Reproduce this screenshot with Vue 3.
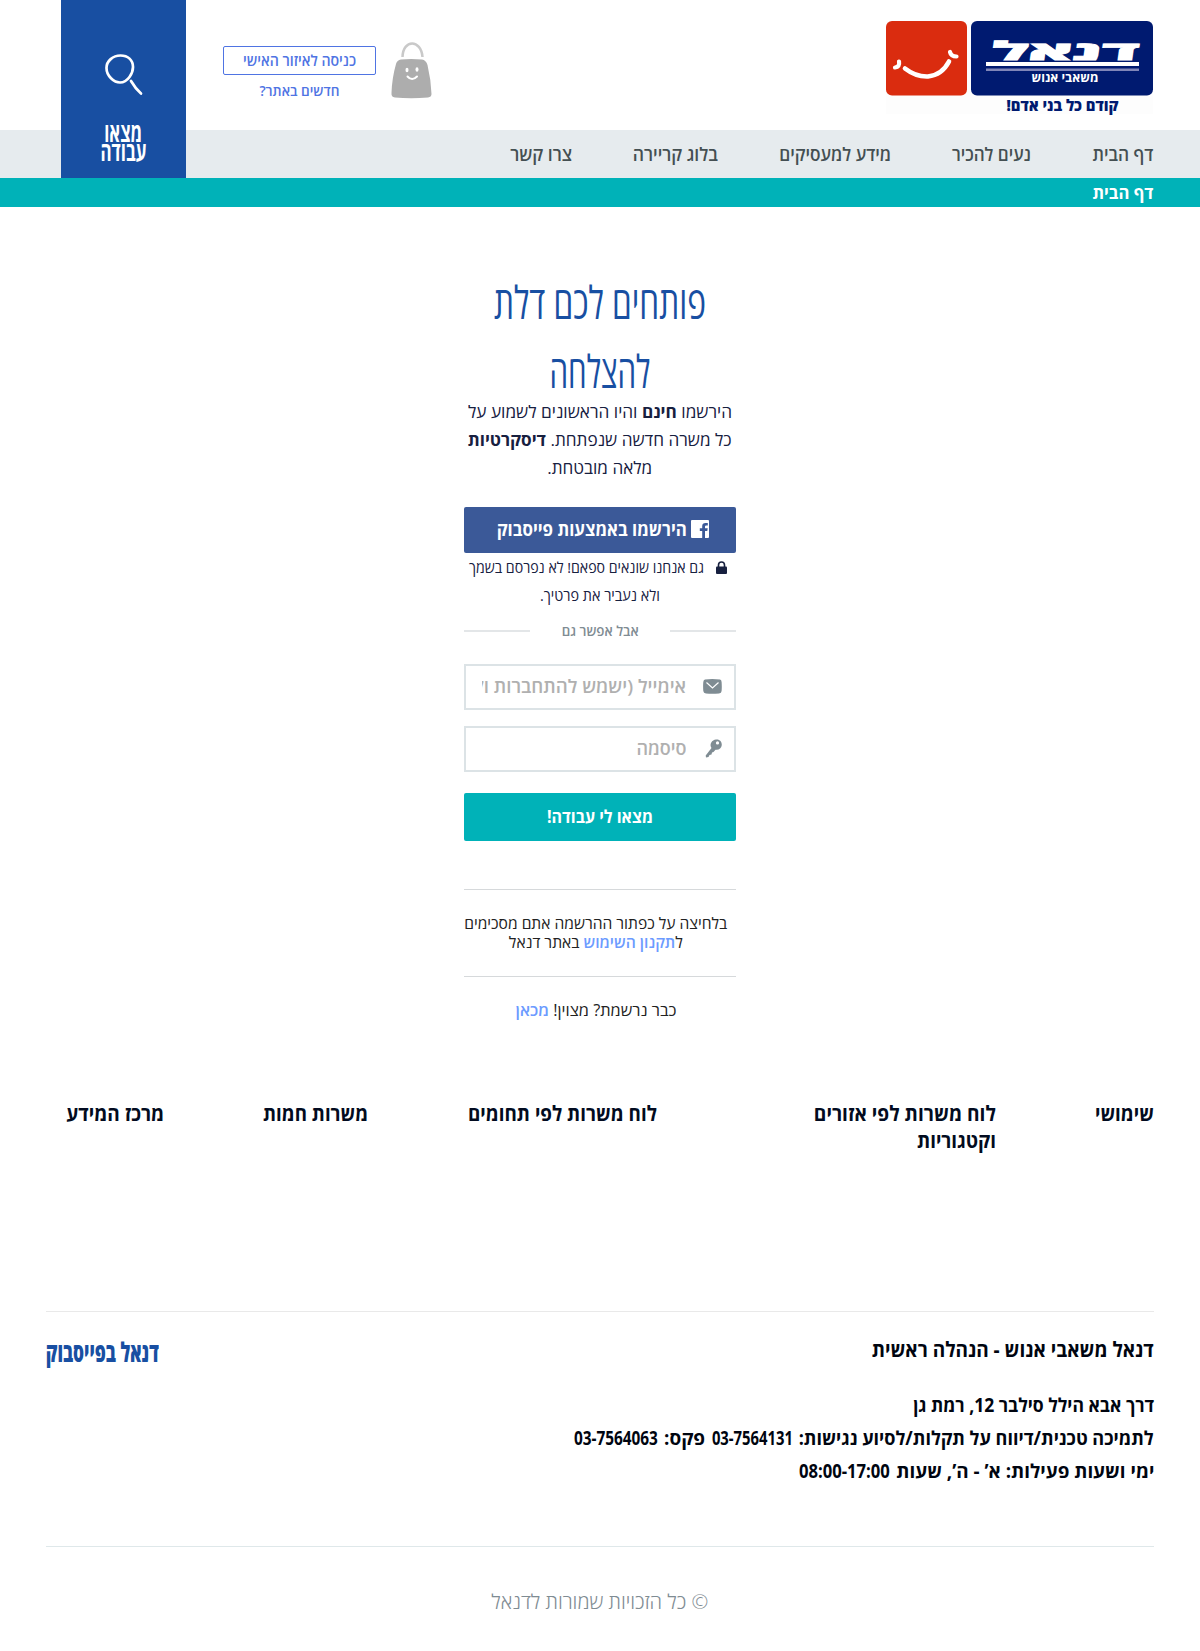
<script setup>
// Condenses or widens a line of text so that it takes exactly the given width.
const vFit = {
  mounted(el, { value }) {
    const natural = el.getBoundingClientRect().width
    el.style.transform = `scaleX(${value / natural})`
    el.style.marginLeft = `${value - natural}px`
  }
}

const nav = [
  { label: 'דף הבית', width: 61 },
  { label: 'נעים להכיר', width: 79 },
  { label: 'מידע למעסיקים', width: 112 },
  { label: 'בלוג קריירה', width: 85 },
  { label: 'צרו קשר', width: 62 }
]

const columns = [
  { lines: [{ text: 'שימושי', width: 59 }], box: 59 },
  { lines: [{ text: 'לוח משרות לפי אזורים', width: 182 }, { text: 'וקטגוריות', width: 79 }], box: 240 },
  { lines: [{ text: 'לוח משרות לפי תחומים', width: 189 }], box: 190 },
  { lines: [{ text: 'משרות חמות', width: 105 }], box: 105 },
  { lines: [{ text: 'מרכז המידע', width: 98 }], box: 98 }
]

const address = [
  [{ text: 'דרך אבא הילל סילבר 12, רמת גן', width: 241 }],
  [
    { text: 'לתמיכה טכנית/דיווח על תקלות/לסיוע נגישות:', width: 355 },
    { text: '03-7564131', width: 81 },
    { text: 'פקס:', width: 41 },
    { text: '03-7564063', width: 84 }
  ],
  [
    { text: 'ימי ושעות פעילות: א’ - ה’, שעות', width: 258 },
    { text: '08:00-17:00', width: 91 }
  ]
]
</script>

<template>
  <div class="page" dir="rtl">
    <header class="header">
      <div class="top">
        <a class="logo">
          <svg width="268" height="94" viewBox="0 0 268 94" direction="ltr">
            <rect width="267" height="93" fill="#fdfdfd" />
            <rect width="81" height="74.5" rx="6" fill="#da2c0f" />
            <rect x="85" width="182" height="74.5" rx="6" fill="#001a70" />
            <g fill="none" stroke="#fff" stroke-linecap="round">
              <path d="M19 47.500Q30 56 42 55.500Q56 54 63 40.500" stroke-width="4.600" />
              <path d="M9 46.500Q14 46 13 40.500" stroke-width="4.200" />
              <path d="M64 31Q65 35.500 70.500 35.500" stroke-width="4.200" />
            </g>
            <text class="logo-name" transform="translate(251.500 38.500) skewX(-8) scale(1 .8)" x="0" y="0" textLength="147" lengthAdjust="spacingAndGlyphs">דנאל</text>
            <rect x="100" y="41" width="153" height="4" fill="#fff" />
            <rect x="100" y="47.500" width="153" height="2.500" fill="#8086b8" />
            <text class="logo-sub" x="212.500" y="61" textLength="67" lengthAdjust="spacingAndGlyphs">משאבי אנוש</text>
            <text class="logo-tag" x="232.500" y="89.500" textLength="112" lengthAdjust="spacingAndGlyphs">קודם כל בני אדם!</text>
          </svg>
        </a>
        <div class="account">
          <svg class="bag" width="41" height="57" viewBox="0 0 41 57">
            <path d="M11.500 15C12 -3 30 -3 31.500 15" fill="none" stroke="#c9c9c9" stroke-width="2.500" />
            <path d="M10 17.500Q20 16.500 31 17.500Q35 18 36.500 23Q40 38 40.500 52Q40.500 55 37 55.500Q20 57 4 55.500Q0 55 .5 51Q1 36 5 22Q6 18 10 17.500Z" fill="#adadad" />
            <ellipse cx="16" cy="28" rx="1.500" ry="2.200" fill="#fff" />
            <ellipse cx="26" cy="27.500" rx="1.500" ry="2.200" fill="#fff" />
            <path d="M16.500 34.500Q21 39.500 26 34.500" fill="none" stroke="#fff" stroke-width="2" stroke-linecap="round" />
          </svg>
          <div class="account-links">
            <a class="login"><span v-fit="113" class="fit">כניסה לאיזור האישי</span></a>
            <a class="join"><span v-fit="80" class="fit">חדשים באתר?</span></a>
          </div>
        </div>
      </div>
      <nav class="nav">
        <a v-for="item in nav" :key="item.label"><span v-fit="item.width" class="fit">{{ item.label }}</span></a>
      </nav>
      <div class="crumbs"><span v-fit="61" class="fit">דף הבית</span></div>
      <a class="search">
        <svg width="38" height="42" viewBox="0 0 38 42" fill="none" stroke="#fff" stroke-width="2.700" stroke-linecap="round">
          <path d="M15.500 1.500C8 1.500 1.500 7 1.500 14C1.500 22 9 28.500 15 28.500C23 28.500 28 19 28 13C28 6 23 1.500 15.500 1.500Z" />
          <path d="M26 27Q30 34 36 39.500" />
        </svg>
        <span class="search-label">
          <span v-fit="38" class="fit">מצאו</span>
          <span v-fit="46" class="fit">עבודה</span>
        </span>
      </a>
    </header>

    <main class="signup">
      <h1 class="title">
        <span v-fit="212" class="fit">פותחים לכם דלת</span>
        <span v-fit="101" class="fit">להצלחה</span>
      </h1>
      <p class="lead">
        <span v-fit="264" class="fit">הירשמו <b>חינם</b> והיו הראשונים לשמוע על</span>
        <span v-fit="264" class="fit">כל משרה חדשה שנפתחת. <b>דיסקרטיות</b></span>
        <span v-fit="105" class="fit">מלאה מובטחת.</span>
      </p>
      <button class="facebook" type="button">
        <svg width="18" height="18" viewBox="0 0 18 18">
          <path d="M1 0H17Q18 0 18 1V17Q18 18 17 18H14V11H16.300L16.700 8.200H14V6.600Q14 5.500 15.200 5.500H16.800V3H14.500Q11.200 3 11.200 6.200V8.200H8.800V11H11.200V18H1Q0 18 0 17V1Q0 0 1 0Z" fill="#fff" />
        </svg>
        <span v-fit="190" class="fit">הירשמו באמצעות פייסבוק</span>
      </button>
      <p class="privacy">
        <span class="privacy-row">
          <svg width="11" height="13" viewBox="0 0 11 13">
            <path d="M2.500 6V4Q2.500 1 5.500 1Q8.500 1 8.500 4V6" fill="none" stroke="#17203f" stroke-width="1.600" />
            <rect y="5.500" width="11" height="7.500" rx="1" fill="#17203f" />
          </svg>
          <span v-fit="235" class="fit">גם אנחנו שונאים ספאם! לא נפרסם בשמך</span>
        </span>
        <span v-fit="120" class="fit">ולא נעביר את פרטיך.</span>
      </p>
      <div class="or"><i></i><span v-fit="77" class="fit">אבל אפשר גם</span><i></i></div>
      <label class="field">
        <svg width="19" height="15" viewBox="0 0 19 15">
          <path d="M2 .5Q9 -.3 17 .5Q18.500 .5 18.600 3Q19 8 18.600 12Q18.500 14.300 16 14.500Q9 15 3 14.500Q.5 14.300 .3 12Q-.1 7 .3 3Q.5 .6 2 .5Z" fill="#7f8c93" />
          <path d="M3.500 3.500L9.500 9L15.500 3.500" fill="none" stroke="#fff" stroke-width="1.200" />
        </svg>
        <span class="placeholder"><span v-fit="214" class="fit">אימייל (ישמש להתחברות וק</span></span>
      </label>
      <label class="field">
        <svg width="19" height="19" viewBox="-2.500 0 19 19">
          <path fill-rule="evenodd" d="M10.500 .5C14 0 16.500 2.500 16.300 6C16 9.500 13 11.300 10 10.700L8 13L6.500 13.500L6 15.500L4 16L3 18L.5 18.500L.2 16.500L6 9C3.500 5 6.500 1 10.500 .5ZM12 2.300A1.600 1.600 0 1 0 12 5.500A1.600 1.600 0 1 0 12 2.300Z" fill="#7f8c93" />
        </svg>
        <span class="placeholder"><span v-fit="50" class="fit">סיסמה</span></span>
      </label>
      <button class="submit" type="button"><span v-fit="106" class="fit">מצאו לי עבודה!</span></button>
      <p class="terms">
        <span v-fit="263" class="fit">בלחיצה על כפתור ההרשמה אתם מסכימים</span>
        <span v-fit="174" class="fit">ל<a>תקנון השימוש</a> באתר דנאל</span>
      </p>
      <p class="already"><span v-fit="161" class="fit">כבר נרשמת? מצוין! <a>מכאן</a></span></p>
    </main>

    <footer class="footer">
      <div class="columns">
        <h3 v-for="(col, i) in columns" :key="i" :style="{ width: col.box + 'px' }">
          <span v-for="line in col.lines" :key="line.text" v-fit="line.width" class="fit">{{ line.text }}</span>
        </h3>
      </div>
      <div class="contact">
        <div>
          <h4 class="company"><span v-fit="282" class="fit">דנאל משאבי אנוש - הנהלה ראשית</span></h4>
          <p class="address">
            <span v-for="(line, i) in address" :key="i" class="address-line">
              <span v-for="part in line" :key="part.text" v-fit="part.width" class="fit">{{ part.text }}</span>
            </span>
          </p>
        </div>
        <h4 class="social"><span v-fit="113" class="fit">דנאל בפייסבוק</span></h4>
      </div>
      <p class="copyright"><span v-fit="217" class="fit">© כל הזכויות שמורות לדנאל</span></p>
    </footer>
  </div>
</template>

<style>
body { margin: 0; background: #fff; }
</style>

<style scoped>
.page { width: 1200px; height: 1651px; font-family: "Open Sans", "DejaVu Sans", sans-serif; color: #17203f; overflow: hidden; }
.page * { box-sizing: border-box; }
h1, h3, h4, p { margin: 0; }
svg { flex: none; display: block; }
button { border: 0; padding: 0; font-family: inherit; }
.fit { display: inline-block; flex: none; white-space: nowrap; transform-origin: right center; }

.header { position: relative; }
.top { height: 130px; padding: 21px 46px 0 0; display: flex; justify-content: space-between; }
.logo-name { font-size: 32px; font-weight: 800; fill: #fff; direction: rtl; stroke: #fff; stroke-width: 1; }
.logo-sub { font-size: 13px; font-weight: 700; fill: #fff; direction: rtl; }
.logo-tag { font-size: 16px; font-weight: 800; fill: #001a70; direction: rtl; }
.account { display: flex; gap: 15px; padding-top: 21px; margin-left: 223px; }
.account-links { width: 153px; padding-top: 4px; display: flex; flex-direction: column; }
.login, .join { display: flex; justify-content: center; color: #4f74e3; font-weight: 600; font-size: 15px; }
.login { height: 29px; line-height: 26px; border: 1px solid #4f74e3; border-radius: 2px; }
.join { line-height: 20px; margin-top: 6px; font-size: 14px; }
.nav { height: 48px; background: #e6ebee; padding-right: 47px; display: flex; gap: 61px; font-size: 18.500px; line-height: 48px; color: #444f52; font-weight: 550; }
.crumbs { height: 29px; background: #00b2b8; padding-right: 47px; color: #fff; font-size: 17px; font-weight: 700; line-height: 29px; }
.search { position: absolute; top: 0; left: 61px; width: 125px; height: 178px; background: #184fa2; display: flex; flex-direction: column; align-items: center; padding-top: 54px; color: #fff; }
.search-label { display: flex; flex-direction: column; align-items: center; margin-top: 26px; font-size: 27px; line-height: 19px; font-weight: 700; }

.signup { width: 272px; margin: 0 auto; height: 850px; padding-top: 60px; text-align: center; }
.signup .fit { vertical-align: top; }
.title { display: flex; flex-direction: column; align-items: center; font-size: 45px; line-height: 69px; font-weight: 500; color: #184fa2; }
.lead { display: flex; flex-direction: column; align-items: center; font-size: 17px; line-height: 28px; margin-top: -7px; font-weight: 450; }
.facebook { width: 272px; height: 46px; margin-top: 25px; border-radius: 2px; background: #3b5998; color: #fff; display: flex; align-items: center; justify-content: center; gap: 4px; font-size: 18.500px; font-weight: 700; line-height: 26px; padding: 0 0 3px 6px; }
.privacy { display: flex; flex-direction: column; align-items: center; font-size: 15px; line-height: 28px; font-weight: 450; }
.privacy-row { display: flex; align-items: center; gap: 12px; padding-right: 4px; }
.or { display: flex; align-items: center; justify-content: space-between; height: 20px; margin-top: 12px; color: #7f8c93; font-size: 14px; font-weight: 600; line-height: 20px; }
.or i { width: 66px; height: 2px; background: #e3e6e8; }
.field { display: flex; align-items: center; height: 46px; border: 2px solid #dce3e6; padding: 0 12px 2px 16px; margin-top: 16px; color: #b0b0b0; font-size: 18.500px; font-weight: 650; line-height: 26px; }
.or + .field { margin-top: 23px; }
.field svg { margin-left: 17px; width: 19px; }
.placeholder { flex: 1; min-width: 0; overflow: hidden; text-align: right; height: 30px; line-height: 30px; }
.submit { width: 272px; height: 48px; margin-top: 21px; border-radius: 2px; background: #00b2b8; color: #fff; font-size: 17.500px; font-weight: 700; line-height: 26px; display: flex; justify-content: center; align-items: center; padding-bottom: 3px; }
.terms { margin-top: 48px; border-top: 1px solid #d6d9db; border-bottom: 1px solid #d6d9db; height: 88px; padding: 24px 8px 0 0; display: flex; flex-direction: column; align-items: center; font-size: 16px; line-height: 19px; color: #222; }
.already { margin-top: 22px; padding-right: 8px; font-size: 16px; line-height: 22px; color: #222; }
.terms a, .already a { color: #6c9bff; font-weight: 600; }

.footer { padding: 0 46px; font-weight: 750; color: #020b20; }
.columns { height: 255px; padding: 43px 0 0 20px; display: flex; justify-content: space-between; border-bottom: 1px solid #e9e9e9; }
.columns h3 { display: flex; flex-direction: column; align-items: flex-start; font-size: 21px; line-height: 27px; }
.contact { height: 235px; border-bottom: 1px solid #dfe8ea; display: flex; justify-content: space-between; padding-top: 22px; color: #000510; }
.company { font-size: 21px; line-height: 30px; }
.address { display: flex; flex-direction: column; font-size: 19px; line-height: 33px; margin-top: 25px; }
.address-line { display: flex; gap: 6.500px; }
.social { color: #184fa2; font-size: 27px; line-height: 36px; font-weight: 800; }
.copyright { text-align: center; margin-top: 40px; font-size: 20px; line-height: 30px; font-weight: 350; color: #7f8c93; }
</style>
